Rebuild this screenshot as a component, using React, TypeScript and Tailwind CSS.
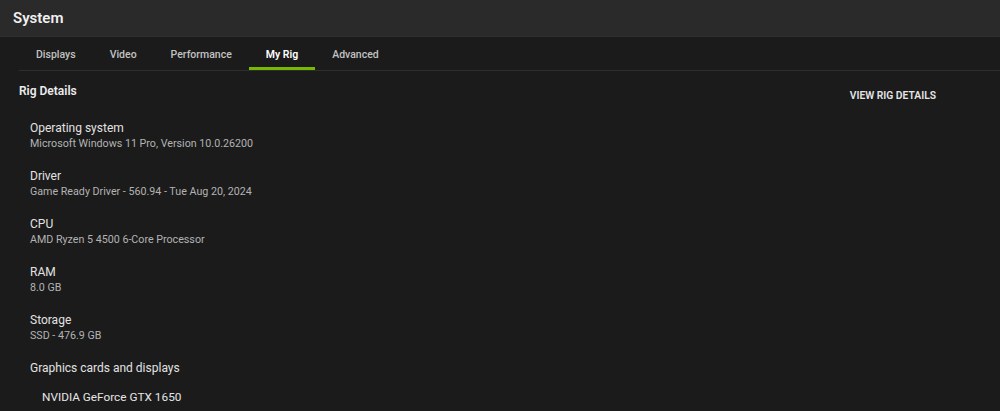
import React from "react";

const tabs = ["Displays", "Video", "Performance", "My Rig", "Advanced"];

const items = [
  { label: "Operating system", value: "Microsoft Windows 11 Pro, Version 10.0.26200" },
  { label: "Driver", value: "Game Ready Driver - 560.94 - Tue Aug 20, 2024" },
  { label: "CPU", value: "AMD Ryzen 5 4500 6-Core Processor" },
  { label: "RAM", value: "8.0 GB" },
  { label: "Storage", value: "SSD - 476.9 GB" },
];

export default function App() {
  return (
    <div
      className="w-[1000px] h-[411px] overflow-hidden bg-[#1b1b1b] flex flex-col"
      style={{ fontFamily: "Roboto, 'Noto Sans', sans-serif" }}
    >
      <div className="h-[37px] shrink-0 bg-[#2a2a2a] border-b border-[#2f2f2f] flex items-center px-[13px]">
        <span className="text-[15px] font-semibold text-[#f0f0f0]">System</span>
      </div>
      <div className="ml-[19px] h-[34px] shrink-0 flex border-b border-[#2e2e2e]">
        {tabs.map((t) => (
          <div
            key={t}
            className={
              "relative px-[17px] pt-[3px] flex items-center text-[10.5px] " +
              (t === "My Rig" ? "text-white font-semibold" : "text-[#c2c2c2] font-medium")
            }
          >
            {t}
            {t === "My Rig" && (
              <div className="absolute left-0 right-0 bottom-0 h-[3px] bg-[#76b900]" />
            )}
          </div>
        ))}
      </div>
      <div className="flex justify-between pl-[19px] pr-[64px] pt-[13px]">
        <span className="text-[12px] font-semibold text-[#ececec] leading-[14px]">Rig Details</span>
        <span className="text-[10.3px] font-semibold text-[#e6e6e6] mt-[6px] leading-[12px]">VIEW RIG DETAILS</span>
      </div>
      <div className="pl-[30px] pt-[18px] flex flex-col">
        {items.map((it) => (
          <div key={it.label} className="h-[48px] flex flex-col">
            <span className="text-[12px] leading-[16px] text-[#e2e2e2]">{it.label}</span>
            <span className="text-[10.7px] leading-[15px] text-[#b3b3b3]">{it.value}</span>
          </div>
        ))}
        <div className="flex flex-col">
          <span className="text-[12px] leading-[16px] text-[#e2e2e2]">Graphics cards and displays</span>
          <span className="pl-[12px] mt-[13px] text-[11.8px] leading-[16px] text-[#e6e6e6]">NVIDIA GeForce GTX 1650</span>
        </div>
      </div>
    </div>
  );
}
